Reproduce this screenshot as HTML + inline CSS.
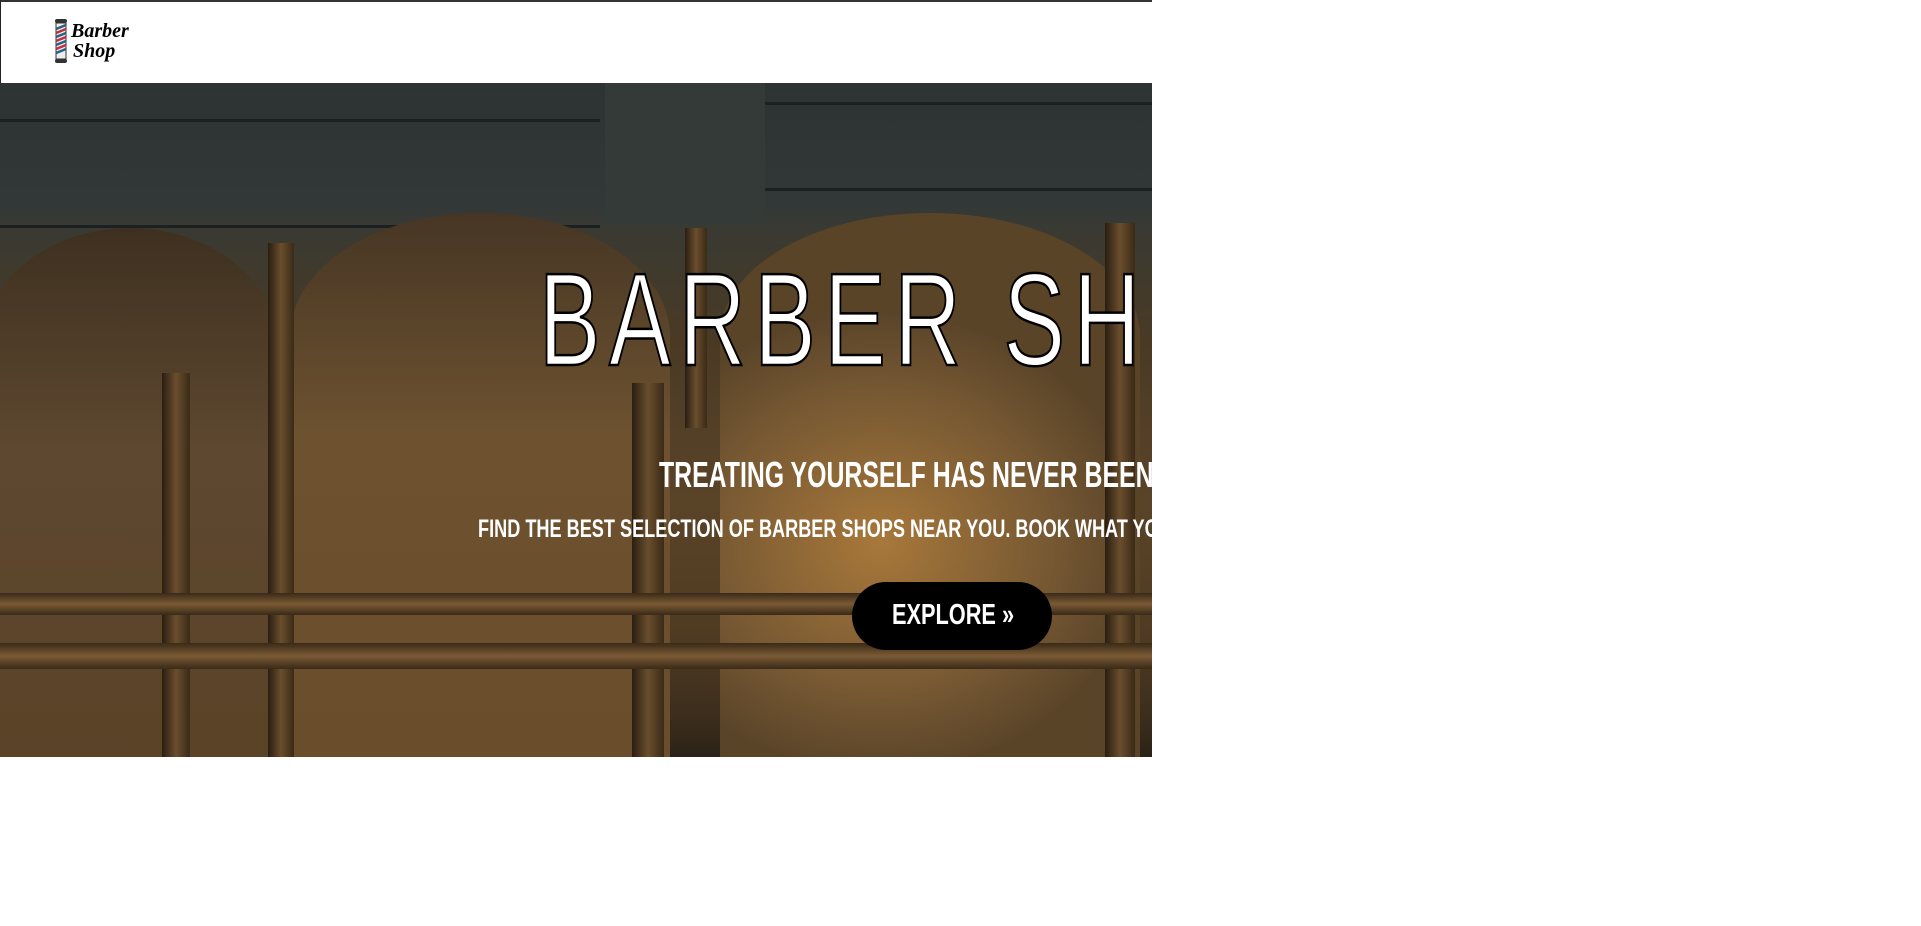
<!DOCTYPE html>
<html><head><meta charset="utf-8"><style>
html,body{margin:0;padding:0;background:#fff;width:1921px;height:926px;overflow:hidden}
.wrap{position:absolute;left:0;top:0;width:1152px;}
.hdr{position:absolute;left:0;top:0;width:1151px;height:81px;border-top:2px solid #333;border-left:1px solid #222;background:#fff}
.logo{position:absolute;left:53px;top:15px}
.hero{position:absolute;left:0;top:83px;width:1152px;height:674px;overflow:hidden;
background:linear-gradient(180deg,#2d3333 0px,#323838 120px,#3a3a32 150px,#4a3a24 260px,#5a4428 420px,#4e3a22 560px,#3a2c1c 640px,#2a2218 674px);}
.back{position:absolute;border-radius:50% 50% 0 0/22% 22% 0 0;}
.plank{position:absolute;background:#1c2020;height:3px}
.post{position:absolute;background:linear-gradient(90deg,#2a1e12,#6a4e2c,#3a2a18);}
.rail{position:absolute;background:linear-gradient(180deg,#3a2a18,#7a5a34,#3a2a18);height:22px}
.t{position:absolute;color:#fff;white-space:nowrap;transform-origin:0 0;font-family:"Liberation Sans",sans-serif}
.t1{left:539px;top:171px;font-size:132px;line-height:1;letter-spacing:12px;-webkit-text-stroke:2.5px #000;transform:scaleX(.70)}
.t2{left:659px;top:374px;font-size:36px;line-height:1;font-weight:bold;transform:scaleX(.69)}
.t3{left:478px;top:434px;font-size:25px;line-height:1;font-weight:bold;transform:scaleX(.725)}
.btn{position:absolute;left:852px;top:499px;width:200px;height:68px;border-radius:34px;background:#000;}
.btn span{position:absolute;left:40px;top:19px;color:#fff;font:bold 29px/1 "Liberation Sans",sans-serif;white-space:nowrap;transform:scaleX(.75);transform-origin:0 0}
</style></head><body>
<div class="wrap">
<div class="hdr">
<svg class="logo" width="80" height="48" viewBox="0 0 80 48">
<rect x="1" y="2" width="12" height="4" rx="2" fill="#333"/>
<rect x="2" y="6" width="10" height="36" fill="#eee" stroke="#333" stroke-width="1"/>
<path d="M2 12 L12 8 M2 20 L12 16 M2 28 L12 24 M2 36 L12 32" stroke="#2a5f8a" stroke-width="2.5"/>
<path d="M2 16 L12 12 M2 24 L12 20 M2 32 L12 28" stroke="#c0303a" stroke-width="2.5"/>
<rect x="1" y="42" width="12" height="4" rx="2" fill="#333"/>
<text x="17" y="20" font-family="Liberation Serif,serif" font-style="italic" font-weight="bold" font-size="20" fill="#000">Barber</text>
<text x="19" y="40" font-family="Liberation Serif,serif" font-style="italic" font-weight="bold" font-size="20" fill="#000">Shop</text>
</svg>
</div>
<div class="hero">
<div class="plank" style="left:0;top:36px;width:600px"></div>
<div class="plank" style="left:0;top:142px;width:600px"></div>
<div class="plank" style="left:765px;top:19px;width:390px"></div>
<div class="plank" style="left:765px;top:105px;width:390px"></div>
<div class="post" style="left:605px;top:0;width:160px;height:140px;background:#343a38"></div>
<div class="back" style="left:-20px;top:145px;width:300px;height:560px;background:linear-gradient(180deg,#3e3020,#5e4830 40%,#5a4226)"></div>
<div class="back" style="left:290px;top:130px;width:380px;height:560px;background:linear-gradient(180deg,#463624,#6e5230 40%,#6a4e2c)"></div>
<div class="back" style="left:720px;top:130px;width:420px;height:560px;background:radial-gradient(ellipse 260px 230px at 160px 330px,#a8783a,#735632 70%,#5a4428)"></div>
<div class="post" style="left:268px;top:160px;width:26px;height:520px"></div>
<div class="post" style="left:162px;top:290px;width:28px;height:390px"></div>
<div class="post" style="left:632px;top:300px;width:32px;height:380px"></div>
<div class="post" style="left:685px;top:145px;width:22px;height:200px"></div>
<div class="post" style="left:1105px;top:140px;width:30px;height:540px"></div>
<div class="rail" style="left:0;top:510px;width:1152px"></div>
<div class="rail" style="left:0;top:560px;width:1152px;height:26px"></div>
<div class="t t1">BARBER SHOP</div>
<div class="t t2">TREATING YOURSELF HAS NEVER BEEN EASIER</div>
<div class="t t3">FIND THE BEST SELECTION OF BARBER SHOPS NEAR YOU. BOOK WHAT YOU WANT</div>
<div class="btn"><span>EXPLORE »</span></div>
</div>
</div>
</body></html>
